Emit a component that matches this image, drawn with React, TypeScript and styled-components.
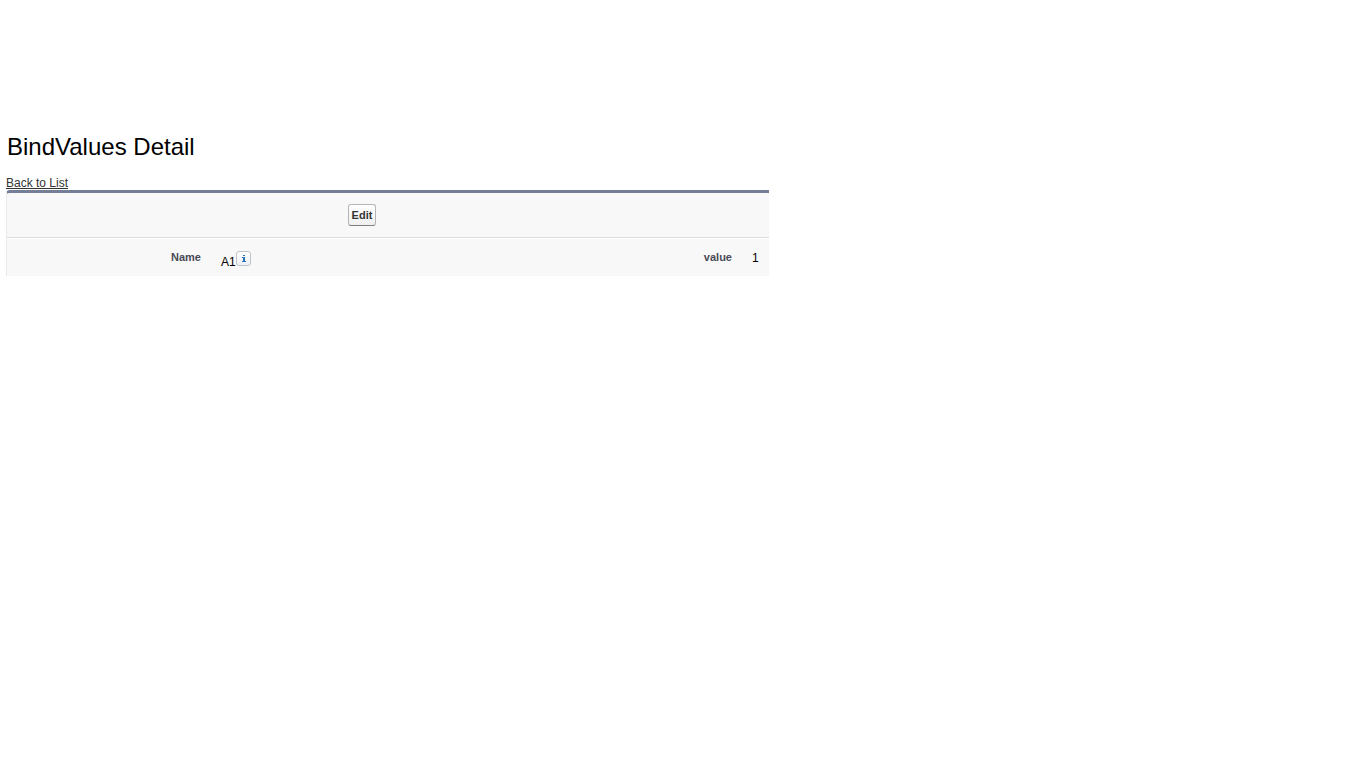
import React from 'react';
import styled, { createGlobalStyle } from 'styled-components';

const GlobalStyle = createGlobalStyle`
  body {
    margin: 0;
    background: #fff;
    color: #222;
    font-family: Arial, "Liberation Sans", sans-serif;
    font-size: 12px;
    line-height: 14px;
  }
`;

const Page = styled.main`
  padding: 133px 6px 0;
`;

const Title = styled.h1`
  margin: 0 1px 15px;
  color: #000;
  font-size: 24px;
  font-weight: 400;
  line-height: 28px;
`;

const BackLink = styled.a`
  display: block;
  width: fit-content;
  color: #333;
  text-decoration: underline;
`;

const Panel = styled.section`
  box-sizing: border-box;
  width: 100%;
  max-width: 763px;
  border-top: 3px solid #747e96;
  border-left: 1px solid #eaeaea;
  border-top-left-radius: 4px;
  background: #f8f8f8;
`;

const Toolbar = styled.div`
  display: flex;
  justify-content: center;
  padding: 11px 52px 11px 0;
  border-bottom: 1px solid #dbdbdb;
`;

const EditButton = styled.button`
  box-sizing: border-box;
  height: 22px;
  padding: 0 3px;
  border: 1px solid #b5b5b5;
  border-bottom-color: #7f7f7f;
  border-radius: 3px;
  background: linear-gradient(#fff, #f0f0f0);
  color: #333;
  font: bold 11px/20px Arial, "Liberation Sans", sans-serif;
`;

const Details = styled.table`
  width: 100%;
  border-top: 1px solid #fff;
  border-spacing: 0;
  table-layout: fixed;
`;

const Label = styled.th<{ $width?: string }>`
  width: ${(p) => p.$width ?? 'auto'};
  padding: 11px 10px 7px 0;
  color: #4a4a56;
  font-size: 11px;
  font-weight: 700;
  text-align: right;
  vertical-align: top;
`;

const Value = styled.td<{ $width: string }>`
  box-sizing: border-box;
  width: ${(p) => p.$width};
  padding: 12px 10px 7px;
  color: #000;
  vertical-align: top;
`;

const ValueLine = styled.div`
  display: flex;
  align-items: flex-end;
  height: 18px;
`;

const InfoButton = styled.button`
  display: flex;
  box-sizing: border-box;
  width: 15px;
  height: 15px;
  margin-bottom: 3px;
  padding: 0;
  border: 1px solid #c0c4c9;
  border-radius: 3px;
  background: linear-gradient(#fff, #edf0f4);
`;

export default function App() {
  return (
    <>
      <GlobalStyle />
      <Page>
        <Title>BindValues Detail</Title>
        <BackLink href="#list">Back to List</BackLink>
        <Panel>
          <Toolbar>
            <EditButton type="button">Edit</EditButton>
          </Toolbar>
          <Details>
            <tbody>
              <tr>
                <Label scope="row" $width="194px">Name</Label>
                <Value $width="50%">
                  <ValueLine>
                    <span>A1</span>
                    <InfoButton type="button" aria-label="Information">
                      <svg width="13" height="13" viewBox="0 0 13 13" shapeRendering="crispEdges">
                        <path d="M6 3h2v1H6zM5 5h3v1H5zM6 6h2v3H6zM5 9h4v1H5z" fill="#2f73b8" />
                      </svg>
                    </InfoButton>
                  </ValueLine>
                </Value>
                <Label scope="row">value</Label>
                <Value $width="27px">1</Value>
              </tr>
            </tbody>
          </Details>
        </Panel>
      </Page>
    </>
  );
}
